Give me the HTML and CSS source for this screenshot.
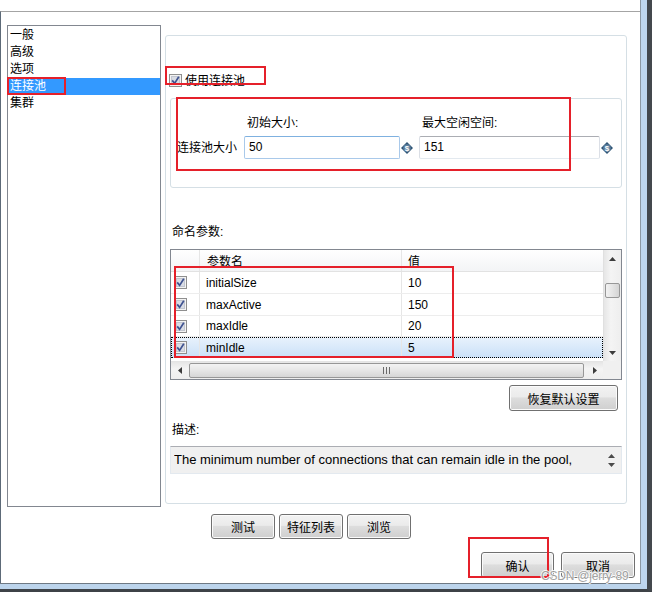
FILE: index.html
```html
<!DOCTYPE html>
<html>
<head>
<meta charset="utf-8">
<link rel="stylesheet" href="styles.css">
</head>
<body>
<div class="outer"><div class="frame"><div class="inner">
  <div class="topgap"></div>
  <div class="win">
    <div class="content">
      <div class="top">
        <ul class="nav">
          <li>一般</li>
          <li>高级</li>
          <li>选项</li>
          <li class="sel">连接池</li>
          <li>集群</li>
        </ul>
        <div class="rcol">
          <div class="group">
            <div class="chkrow">
              <svg class="cb" viewBox="0 0 13 13" width="13" height="13"><rect x="0.5" y="0.5" width="12" height="12" fill="#f3f3f3" stroke="#8f8f8f"/><rect x="2.5" y="2.5" width="8" height="8" fill="#d9dce4" stroke="#c2c6d0"/><path d="M3.2 6.4 L5.6 9.4 L9.8 2.8" fill="none" stroke="#3e5290" stroke-width="1.7"/></svg>
              <span>使用连接池</span>
            </div>
            <div class="sizebox">
              <span class="cap c2">初始大小:</span>
              <span class="cap c4">最大空闲空间:</span>
              <span class="rowlbl">连接池大小</span>
              <div class="field hot f1">50</div>
              <svg class="spin s1" viewBox="0 0 12 12" width="12" height="12"><path d="M6 0 L12 6 L6 12 L0 6Z" fill="#2e5474"/><circle cx="6" cy="6" r="3.8" fill="#5d7f9e"/><text x="6" y="8.8" font-size="8" font-weight="bold" text-anchor="middle" fill="#fff" font-family="Liberation Sans">$</text></svg>
              <div class="field f2">151</div>
              <svg class="spin s2" viewBox="0 0 12 12" width="12" height="12"><path d="M6 0 L12 6 L6 12 L0 6Z" fill="#2e5474"/><circle cx="6" cy="6" r="3.8" fill="#5d7f9e"/><text x="6" y="8.8" font-size="8" font-weight="bold" text-anchor="middle" fill="#fff" font-family="Liberation Sans">$</text></svg>
            </div>
            <div class="lbl lbl-params">命名参数:</div>
            <div class="table">
              <div class="tmain">
                <div class="tdata">
                  <div class="tr thead"><div class="td c-chk"></div><div class="td c-name">参数名</div><div class="td c-val">值</div></div>
                  <div class="tr r1"><div class="td c-chk"><svg class="cb" viewBox="0 0 13 13" width="13" height="13"><rect x="0.5" y="0.5" width="12" height="12" fill="#f3f3f3" stroke="#8f8f8f"/><rect x="2.5" y="2.5" width="8" height="8" fill="#d9dce4" stroke="#c2c6d0"/><path d="M3.2 6.4 L5.6 9.4 L9.8 2.8" fill="none" stroke="#3e5290" stroke-width="1.7"/></svg></div><div class="td c-name">initialSize</div><div class="td c-val">10</div></div>
                  <div class="tr r2"><div class="td c-chk"><svg class="cb" viewBox="0 0 13 13" width="13" height="13"><rect x="0.5" y="0.5" width="12" height="12" fill="#f3f3f3" stroke="#8f8f8f"/><rect x="2.5" y="2.5" width="8" height="8" fill="#d9dce4" stroke="#c2c6d0"/><path d="M3.2 6.4 L5.6 9.4 L9.8 2.8" fill="none" stroke="#3e5290" stroke-width="1.7"/></svg></div><div class="td c-name">maxActive</div><div class="td c-val">150</div></div>
                  <div class="tr r3"><div class="td c-chk"><svg class="cb" viewBox="0 0 13 13" width="13" height="13"><rect x="0.5" y="0.5" width="12" height="12" fill="#f3f3f3" stroke="#8f8f8f"/><rect x="2.5" y="2.5" width="8" height="8" fill="#d9dce4" stroke="#c2c6d0"/><path d="M3.2 6.4 L5.6 9.4 L9.8 2.8" fill="none" stroke="#3e5290" stroke-width="1.7"/></svg></div><div class="td c-name">maxIdle</div><div class="td c-val">20</div></div>
                  <div class="tr r4 selrow"><div class="td c-chk"><svg class="cb" viewBox="0 0 13 13" width="13" height="13"><rect x="0.5" y="0.5" width="12" height="12" fill="#f3f3f3" stroke="#8f8f8f"/><rect x="2.5" y="2.5" width="8" height="8" fill="#d9dce4" stroke="#c2c6d0"/><path d="M3.2 6.4 L5.6 9.4 L9.8 2.8" fill="none" stroke="#3e5290" stroke-width="1.7"/></svg></div><div class="td c-name">minIdle</div><div class="td c-val">5</div></div>
                </div>
                <div class="vscroll">
                  <div class="sbtn"><svg viewBox="0 0 7 4" width="7" height="4"><path d="M0 4 L3.5 0 L7 4Z" fill="#3c3c3c"/></svg></div>
                  <div class="vthumb"></div>
                  <div class="vspace"></div>
                  <div class="sbtn"><svg viewBox="0 0 7 4" width="7" height="4"><path d="M0 0 L3.5 4 L7 0Z" fill="#3c3c3c"/></svg></div>
                </div>
              </div>
              <div class="hrow">
                <div class="hscroll">
                  <div class="hbtn"><svg viewBox="0 0 4 7" width="4" height="7"><path d="M4 0 L0 3.5 L4 7Z" fill="#3c3c3c"/></svg></div>
                  <div class="hthumb"><svg viewBox="0 0 7 7" width="7" height="7"><path d="M0.5 0 V7 M3.5 0 V7 M6.5 0 V7" stroke="#6a6a6a" stroke-width="1"/></svg></div>
                  <div class="hbtn"><svg viewBox="0 0 4 7" width="4" height="7"><path d="M0 0 L4 3.5 L0 7Z" fill="#3c3c3c"/></svg></div>
                </div>
                <div class="corner"></div>
              </div>
            </div>
            <div class="resetrow"><button class="btn reset">恢复默认设置</button></div>
            <div class="lbl lbl-desc">描述:</div>
            <div class="desc">
              <span class="desctext">The minimum number of connections that can remain idle in the pool,</span>
              <div class="dspin">
                <svg viewBox="0 0 7 4" width="7" height="4"><path d="M0 4 L3.5 0 L7 4Z" fill="#4a4a4a"/></svg>
                <svg viewBox="0 0 7 4" width="7" height="4"><path d="M0 0 L3.5 4 L7 0Z" fill="#4a4a4a"/></svg>
              </div>
            </div>
          </div>
          <div class="btnrow">
            <button class="btn small">测试</button>
            <button class="btn small">特征列表</button>
            <button class="btn small">浏览</button>
          </div>
        </div>
      </div>
      <div class="footer">
        <button class="btn ok">确认</button>
        <button class="btn cancel">取消</button>
      </div>
    </div>
  </div>
</div></div></div>

<div class="mark m-nav"></div>
<div class="mark m-chk"></div>
<div class="mark m-size"></div>
<div class="mark m-rows"></div>
<div class="mark m-ok"></div>
<div class="wm">CSDN @jerry-89</div>
</body>
</html>
```

FILE: styles.css
```css
* { box-sizing: border-box; margin: 0; padding: 0; }
html, body { width: 652px; height: 592px; overflow: hidden; }
body {
  position: relative;
  background: #fff;
  color: #000;
  font-family: "Liberation Sans", "Noto Sans CJK SC", sans-serif;
  font-size: 12px;
  line-height: 16px;
}

/* window chrome */
.outer { width: 652px; height: 592px; border-right: 5px solid #44484d; border-bottom: 3px solid #3e4247; }
.frame { height: 100%; border-right: 6px solid #bfd6ee; border-bottom: 5px solid #bcd4ec; }
.inner { height: 100%; border-right: 1px solid #8d98a3; border-bottom: 1px solid #6f7984; display: flex; flex-direction: column; background: #fff; }
.topgap { height: 11px; flex: none; }
.win { flex: 1; border-top: 1px solid #a4a4a4; border-left: 1px solid #5d6a78; }
.content { padding: 13px 5px 0 6px; }

.top { display: flex; align-items: flex-start; }

/* left navigation list */
.nav { list-style: none; width: 154px; height: 482px; border: 1px solid #828790; padding-top: 1px; flex: none; }
.nav li { height: 17px; line-height: 17px; padding-left: 2px; font-size: 12px; }
.nav li.sel { background: #3399ff; color: #fff; }

/* right column */
.rcol { margin-left: 4px; padding-top: 10px; width: 462px; flex: none; }
.group { height: 469px; border: 1px solid #d5dfe5; border-radius: 3px; }

.chkrow { display: flex; align-items: center; gap: 3px; height: 15px; margin-top: 37px; padding-left: 3px; }
.cb { display: block; flex: none; }

.sizebox {
  margin: 10px 0 0 4px;
  width: 452px;
  height: 90px;
  border: 1px solid #d5dfe5;
  border-radius: 3px;
  padding: 16px 0 0 6px;
  display: grid;
  grid-template-columns: 67px 156px 19px 181px 12px;
  grid-template-rows: 16px 23px;
  row-gap: 5px;
  align-items: center;
}
.cap { padding-left: 3px; white-space: nowrap; }
.c2 { grid-column: 2; grid-row: 1; }
.c4 { grid-column: 4; grid-row: 1; }
.rowlbl { grid-column: 1; grid-row: 2; white-space: nowrap; }
.f1 { grid-column: 2; grid-row: 2; }
.s1 { grid-column: 3; grid-row: 2; }
.f2 { grid-column: 4; grid-row: 2; }
.s2 { grid-column: 5; grid-row: 2; }
.field {
  height: 23px;
  border: 1px solid #dbdfe6;
  border-top-color: #abadb3;
  border-bottom-color: #e3e9ef;
  border-radius: 2px;
  padding-left: 4px;
  line-height: 21px;
  font-size: 12px;
}
.field.hot { border-color: #a9c9ea; border-top-color: #7fb1e0; }
.spin { display: block; margin-left: 1px; }

.lbl { height: 16px; padding-left: 6px; }
.lbl-params { margin-top: 36px; }
.lbl-desc { margin-top: 11px; }

/* parameter table */
.table { margin: 9px 0 0 4px; width: 452px; height: 131px; border: 1px solid #828790; display: flex; flex-direction: column; background: #fff; }
.tmain { display: flex; height: 111px; }
.tdata { flex: 1; }
.tr { display: flex; height: 21px; border-bottom: 1px solid #ededed; }
.thead { height: 22px; background: linear-gradient(#ffffff, #f3f4f6); border-bottom: 1px solid #e2e2e2; }
.thead .td { padding-top: 3px; }
.r1, .r2 { height: 22px; }
.td { display: flex; align-items: center; border-right: 1px solid #e6e6e6; padding-left: 6px; white-space: nowrap; }
.c-chk { width: 29px; padding-left: 3px; }
.c-name { width: 202px; }
.c-val { flex: 1; border-right: none; }
.thead .c-name { padding-left: 7px; }
.selrow { background: linear-gradient(#e9f2fc, #c9e0f8); outline: 1px dotted #000; outline-offset: -1px; border-bottom: none; }

.vscroll { width: 18px; display: flex; flex-direction: column; background: linear-gradient(90deg, #e6e6e6, #f4f4f4 40%, #eeeeee); border-left: 1px solid #e0e0e0; }
.sbtn { height: 17px; display: flex; align-items: center; justify-content: center; }
.sbtn svg { display: block; }
.vthumb { height: 15px; margin: 16px 1px 0 1px; border: 1px solid #979797; border-radius: 2px; background: linear-gradient(90deg, #f2f2f2, #e4e4e4 50%, #d4d4d4); }
.vspace { flex: 1; }

.hrow { display: flex; height: 18px; }
.hscroll { flex: 1; display: flex; align-items: center; background: linear-gradient(#e6e6e6, #f4f4f4 40%, #eeeeee); border-top: 1px solid #e4e4e4; }
.hbtn { width: 17px; height: 17px; display: flex; align-items: center; justify-content: center; flex: none; }
.hthumb { flex: 1; height: 15px; margin: 0 2px 0 1px; border: 1px solid #979797; border-radius: 2px; background: linear-gradient(#f3f3f3, #e6e6e6 50%, #d6d6d6); display: flex; align-items: center; justify-content: center; }
.hthumb svg { display: block; }
.corner { width: 18px; background: #f0f0f0; }

.resetrow { display: flex; justify-content: flex-end; margin-top: 5px; padding-right: 8px; }

/* buttons */
.btn {
  font-family: "Liberation Sans", "Noto Sans CJK SC", sans-serif;
  font-size: 12px;
  color: #000;
  height: 25px;
  border: 1px solid #707070;
  border-radius: 3px;
  background: linear-gradient(#f2f2f2 0%, #ebebeb 45%, #dddddd 50%, #cfcfcf 100%);
  box-shadow: inset 0 0 0 1px #fbfbfb;
  display: flex;
  align-items: center;
  justify-content: center;
  flex: none;
}
.reset { width: 109px; height: 26px; }
.small { width: 64px; }
.ok { width: 73px; height: 26px; }
.cancel { width: 74px; height: 26px; }

/* description box */
.desc {
  margin: 8px 0 0 4px;
  width: 452px;
  height: 28px;
  background: #f0f0f0;
  border: 1px solid #e3e9ef;
  border-top-color: #abadb3;
  display: flex;
  align-items: center;
  padding-left: 3px;
}
.desctext { flex: 1; font-size: 13px; white-space: nowrap; overflow: hidden; }
.dspin { width: 17px; display: flex; flex-direction: column; align-items: center; gap: 5px; padding-right: 2px; }
.dspin svg { display: block; }

.btnrow { display: flex; gap: 4px; margin: 10px 0 0 46px; }
.footer { display: flex; justify-content: flex-end; gap: 7px; margin-top: 13px; }

/* red annotation boxes drawn over the screenshot */
.mark { position: absolute; border: 2px solid #e5202a; pointer-events: none; }
.m-nav { left: 7px; top: 77px; width: 59px; height: 18px; }
.m-chk { left: 165px; top: 66px; width: 101px; height: 19px; }
.m-size { left: 176px; top: 97px; width: 395px; height: 74px; }
.m-rows { left: 174px; top: 266px; width: 280px; height: 92px; }
.m-ok { left: 468px; top: 537px; width: 81px; height: 41px; }

.wm {
  position: absolute;
  left: 541px;
  top: 571px;
  font-size: 12px;
  line-height: 11px;
  color: #9a9a9a;
  letter-spacing: -0.2px;
  text-shadow: 1px 0 0 #fff, -1px 0 0 #fff, 0 1px 0 #fff, 0 -1px 0 #fff;
  opacity: 0.9;
}
```
